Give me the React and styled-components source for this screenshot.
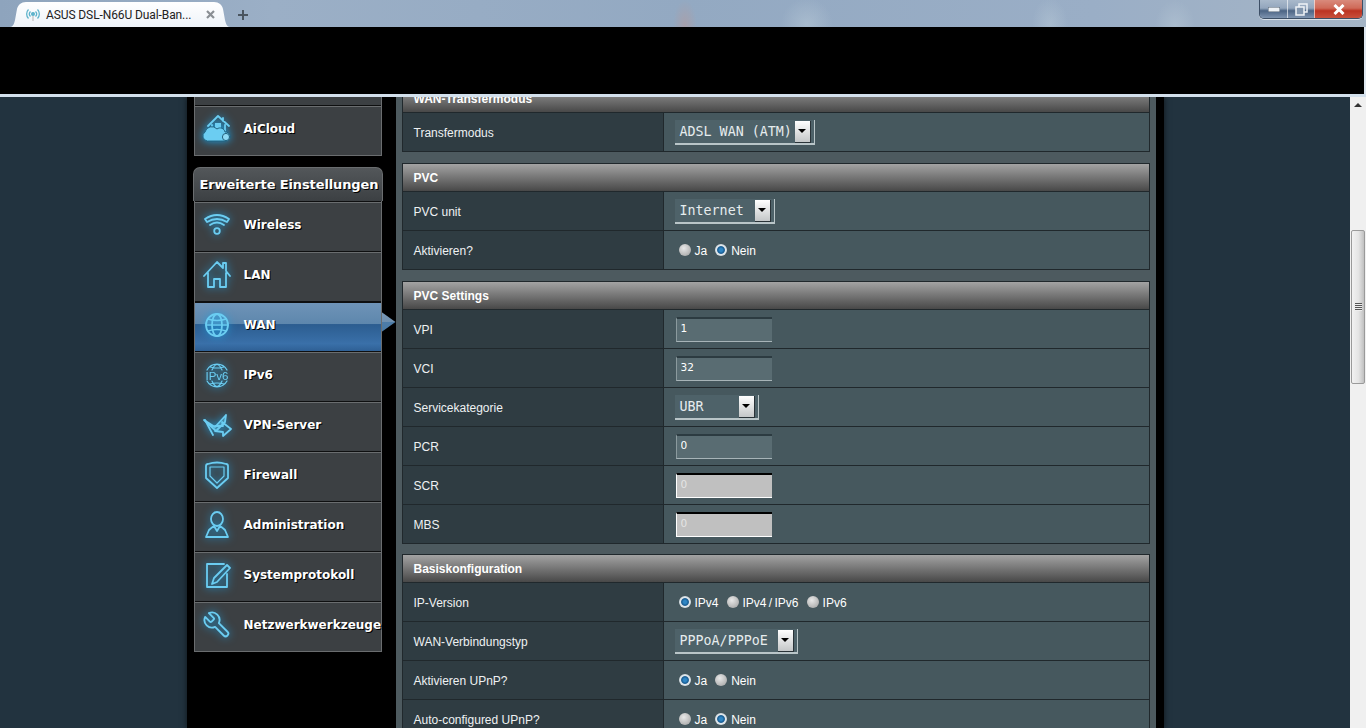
import React from 'react'
import styled, { createGlobalStyle } from 'styled-components'

const GlobalStyle = createGlobalStyle`
  html, body {
    margin: 0;
    height: 100%;
    overflow: hidden;
    background: #000;
    font-family: "Liberation Sans", Arial, sans-serif;
  }
`;

const Screen = styled.div`
  width: 1366px;
  height: 728px;
  display: flex;
  flex-direction: column;
  overflow: hidden;
`;

const TitleBar = styled.div`
  height: 27px;
  flex: none;
  display: flex;
  align-items: flex-end;
  padding-left: 10px;
  background:
    radial-gradient(ellipse 12px 26px at 685px 26px, rgba(214, 140, 120, .3), transparent),
    radial-gradient(ellipse 26px 26px at 807px 24px, rgba(196, 212, 222, .4), transparent),
    radial-gradient(ellipse 18px 26px at 1050px 24px, rgba(196, 212, 222, .35), transparent),
    radial-gradient(ellipse 20px 26px at 1175px 26px, rgba(196, 212, 222, .35), transparent),
    linear-gradient(90deg, #8ea4bd 0%, #9bafc6 20%, #93a9c2 50%, #9aaec6 80%, #a5b5c6 100%);
`;

const Tab = styled.div`
  width: 220px;
  height: 25px;
  box-sizing: border-box;
  display: flex;
  align-items: center;
  padding: 0 15px 0 16px;
  background: linear-gradient(#ffffff, #eef3f9);
  clip-path: path('M0 25 C3 25 4 22 5 18 L7 7 C8 3 11 0 16 0 L204 0 C209 0 212 3 213 7 L215 18 C216 22 217 25 220 25 Z');
`;

const TabTitle = styled.span`
  flex: 1;
  margin-left: 6px;
  font: 12px Roboto, "Liberation Sans", sans-serif;
  letter-spacing: -.1px;
  color: #222;
  white-space: nowrap;
`;

const NewTab = styled.svg`
  width: 12px;
  height: 12px;
  margin: 0 0 6px 7px;
`;

const WindowButtons = styled.div`
  margin-left: auto;
  margin-right: 3px;
  align-self: flex-start;
  display: flex;
  height: 18px;
  border: 1px solid #3d4f66;
  border-top: 0;
  border-radius: 0 0 5px 5px;
  box-shadow: 0 1px 0 rgba(255, 255, 255, .6);
  overflow: hidden;
`;

const WinButton = styled.div`
  width: ${p => p.$width}px;
  display: flex;
  align-items: center;
  justify-content: center;
  border-left: ${p => (p.$first ? '0' : '1px solid rgba(255,255,255,.6)')};
  background: ${p => (p.$close
    ? 'linear-gradient(#d98a7c 0%, #cf6a58 45%, #bb3322 60%, #c8503c 100%)'
    : 'linear-gradient(#a9b9cb 0%, #93a6bd 45%, #4c6484 60%, #7e94b0 100%)')};
`;

const BlackBand = styled.div`
  height: 67px;
  flex: none;
  background: #000;
  border-right: 2px solid #dfe8f0;
  box-sizing: border-box;
`;

const Divider = styled.div`
  height: 3px;
  flex: none;
  background: #d3e0ec;
`;

const Viewport = styled.div`
  flex: 1;
  min-height: 0;
  display: flex;
`;

const Page = styled.div`
  flex: 1;
  display: flex;
  justify-content: center;
  overflow: hidden;
  background: #22333f;
`;

const Column = styled.div`
  width: 977px;
  display: flex;
  gap: 14px;
  padding-left: 7px;
  box-sizing: border-box;
  background: #000;
  box-shadow: 0 0 6px rgba(0, 0, 0, .6);
`;

const Sidebar = styled.nav`
  width: 188px;
  flex: none;
  margin-top: -42px;
`;

const NavGroup = styled.div`
  border: 1px solid #6a6d6f;
  border-top: 0;
  margin-bottom: 11px;
`;

const NavHead = styled.div`
  height: 34px;
  box-sizing: border-box;
  display: flex;
  align-items: center;
  padding-left: 6px;
  margin: 0 -1px;
  border: 1px solid #6a6d6f;
  border-bottom: 0;
  border-radius: 7px 7px 0 0;
  background: linear-gradient(#53575a, #3c4043);
  font: bold 13px "DejaVu Sans", Verdana, sans-serif;
  letter-spacing: -.12px;
  color: #fff;
  text-shadow: 1px 1px 0 #000;
  white-space: nowrap;
`;

const NavRow = styled.div`
  position: relative;
  height: 50px;
  box-sizing: border-box;
  display: flex;
  align-items: center;
  padding: 0 0 4px 7px;
  border-top: 1px solid #0e0f10;
  box-shadow: inset 0 1px 0 ${p => (p.$active ? '#0e0f10' : '#6a6d6f')};
  background: ${p => (p.$active
    ? 'linear-gradient(#6f94b8 0%, #5e87ad 44%, #2c5d90 46%, #3a70a9 85%, #2f6095 100%)'
    : '#3c4043')};

  ${p => p.$active && `
    &::after {
      content: '';
      position: absolute;
      left: 100%;
      top: 10px;
      width: 14px;
      height: 20px;
      margin-left: 1px;
      background: linear-gradient(#7a9ab8 0%, #6f90b0 50%, #4d7ca8 52%, #4a7aa4 100%);
      clip-path: polygon(0 0, 100% 50%, 0 100%);
    }
  `}
`;

const NavIcon = styled.svg`
  width: 30px;
  height: 30px;
  flex: none;
  margin-right: 12px;
  fill: none;
  stroke: #6bcdf2;
  stroke-width: 1.8;
  stroke-linejoin: round;
  stroke-linecap: round;
  filter: drop-shadow(0 0 4px #1f9fe0);
`;

const NavLabel = styled.span`
  font: bold 12px "DejaVu Sans", Verdana, sans-serif;
  color: #fff;
  text-shadow: 1px 1px 0 #000;
  white-space: nowrap;
`;

const Panel = styled.main`
  width: 760px;
  flex: none;
  overflow: hidden;
  background: #4d5a5f;
`;

const PanelInner = styled.div`
  margin: -13px 6px 0;
`;

const Table = styled.section`
  margin-bottom: ${p => p.$gap ?? 11}px;
  border: 1px solid #20282c;
  border-bottom-width: 0;
`;

const TableHead = styled.h2`
  margin: 0;
  height: 28px;
  box-sizing: border-box;
  padding-left: 11px;
  display: flex;
  align-items: center;
  border-bottom: 1px solid #20282c;
  background: linear-gradient(#a3a3a3, #484848);
  font: bold 12px "Liberation Sans", Arial, sans-serif;
  color: #fff;
`;

const Row = styled.div`
  height: 39px;
  box-sizing: border-box;
  display: grid;
  grid-template-columns: 261px 1fr;
  border-bottom: 1px solid #20282c;
`;

const Label = styled.div`
  display: flex;
  align-items: center;
  padding: 2px 0 0 11px;
  background: #2f3c42;
  border-right: 1px solid #20282c;
  font-size: 12px;
  color: #eef1f2;
`;

const Value = styled.div`
  display: flex;
  align-items: center;
  padding: 2px 0 0 11px;
  background: #46585e;
`;

const Select = styled.div`
  width: ${p => p.$width}px;
  height: 25px;
  margin-bottom: 1px;
  box-sizing: border-box;
  display: flex;
  align-items: center;
  justify-content: space-between;
  padding: 0 3px 0 5px;
  background: #4e6269;
  border-bottom: 2px solid #b9c5c8;
  border-right: 1px solid #b9c5c8;
  font: 13.33px "DejaVu Sans Mono", "Liberation Mono", monospace;
  color: #e6ecee;
  white-space: pre;
`;

const SelectArrow = styled.span`
  width: 15px;
  height: 21px;
  flex: none;
  display: flex;
  align-items: center;
  justify-content: center;
  background: linear-gradient(#ffffff, #c4c7c8);
  border: 1px solid #2a3338;
  border-width: 0 1px 1px 0;

  &::before {
    content: '';
    border: 4px solid transparent;
    border-top: 4px solid #000;
    border-bottom: 0;
  }
`;

const TextInput = styled.input`
  width: 96px;
  height: 25px;
  box-sizing: border-box;
  margin: 0 0 1px 1px;
  padding: 0 0 4px 4px;
  border: 0;
  border-top: 2px solid #2c3b41;
  border-left: 1px solid #8b9a9e;
  border-bottom: 1px solid #a7b4b8;
  border-radius: 0;
  outline: 0;
  background: #596c72;
  font: 10.5px "DejaVu Sans", sans-serif;
  color: #fff;

  &:disabled {
    background: #c0c0c0;
    border-top: 2px solid #000;
    border-left: 1px solid #fff;
    border-bottom: 1px solid #fff;
    color: #e4e4e4;
  }
`;

const RadioGroup = styled.div`
  display: flex;
  align-items: center;
  gap: 8px;
  padding-left: 4px;
`;

const RadioLabel = styled.label`
  display: flex;
  align-items: center;
  gap: 4px;
  font-size: 12px;
  word-spacing: -1px;
  color: #fff;
`;

const Radio = styled.input`
  appearance: none;
  width: 12px;
  height: 12px;
  margin: 0 0 2px;
  border-radius: 50%;
  background: radial-gradient(circle at 40% 35%, #e8e8e8, #b0b0b0 75%, #8a8a8a);

  &:checked {
    background: radial-gradient(circle at 50% 50%, #2f86c4 0 1.5px, #175a90 3.4px, #e4eaee 4.4px, #aebac0 100%);
  }
`;

const ScrollTrack = styled.div`
  width: 16px;
  flex: none;
  box-sizing: border-box;
  position: relative;
  background: #f0f0f0;
`;

const ScrollUp = styled.div`
  height: 0;
  width: 0;
  margin: 6px 0 0 4px;
  border: 4px solid transparent;
  border-top: 0;
  border-bottom: 4px solid #333;
`;

const ScrollThumb = styled.div`
  position: absolute;
  top: 133px;
  left: 1px;
  width: 14px;
  height: 154px;
  box-sizing: border-box;
  display: flex;
  align-items: center;
  justify-content: center;
  border: 1px solid #9a9a9a;
  border-radius: 2px;
  background: linear-gradient(90deg, #f2f2f2 0%, #e4e4e4 55%, #c0c0c0 100%);
`;

const Grip = styled.div`
  width: 7px;
  height: 8px;
  background: repeating-linear-gradient(#555 0 1px, #eee 1px 2px);
`;

const AiCloudIcon = () => (
  <NavIcon viewBox="0 0 30 30">
    <path d="M6 12 L16 2 L27 12 M21 4 V7 M10 11 V17 M23 11 V17" />
    <path d="M13 9 h6 v6 h-6z" fill="#6bcdf2" stroke="none" />
    <path d="M5 27 a5 5 0 0 1 -2 -9 a7 7 0 0 1 12 -3 a5 5 0 0 1 8 3 a4.5 4.5 0 0 1 1 9 z" fill="#6bcdf2" stroke="#22627f" strokeWidth="1" />
    <circle cx="24" cy="23" r="3.6" fill="#8fdaf5" stroke="#22627f" strokeWidth="1" />
  </NavIcon>
)

const WifiIcon = () => (
  <NavIcon viewBox="0 0 30 30">
    <path d="M3 9 Q15 1 27 9 L25 12 Q15 6 5 12 Z" />
    <path d="M8 15 Q15 10 22 15" />
    <circle cx="15" cy="21" r="2.8" />
  </NavIcon>
)

const HouseIcon = () => (
  <NavIcon viewBox="0 0 30 30">
    <path d="M2 16 L15 2 L21 8 V3 H24 V11 L28 16 M6 13 V27 H12 V19 H18 V27 H24 V13" />
  </NavIcon>
)

const GlobeIcon = () => (
  <NavIcon viewBox="0 0 30 30">
    <circle cx="15" cy="15" r="11" />
    <ellipse cx="15" cy="15" rx="5" ry="11" />
    <path d="M4 15 H26 M6 9 Q15 12 24 9 M6 21 Q15 18 24 21" strokeWidth="1.4" />
  </NavIcon>
)

const Ipv6Icon = () => (
  <NavIcon viewBox="0 0 30 30">
    <path d="M5 10 A11.5 11.5 0 0 1 25 10 M5 21 A11.5 11.5 0 0 0 25 21 M10 10 Q15 -1 20 10 M10 21 Q15 32 20 21 M8 7 Q15 9 22 7 M8 24 Q15 22 22 24" strokeWidth="1.2" />
    <text x="15" y="19.5" textAnchor="middle" fontSize="11.5" fontFamily="Liberation Sans, sans-serif" fill="#6bcdf2" stroke="none">IPv6</text>
  </NavIcon>
)

const VpnIcon = () => (
  <NavIcon viewBox="0 0 30 30">
    <path d="M2 10 L13 17 L24 5 L23 12 L14 21 Z" fill="#6bcdf2" fillOpacity=".35" />
    <path d="M3 10 L11 25 M13 16 H21 L20 12 L29 19 L21 26 V22 L13 21" />
  </NavIcon>
)

const ShieldIcon = () => (
  <NavIcon viewBox="0 0 30 30">
    <path d="M6 4 Q15 1 24 4 Q26 4 26 6 V18 L15 28 L4 18 V6 Q4 4 6 4 Z" />
    <path d="M8 7 H22 V16 L15 23 L8 16 Z" strokeWidth="1.2" />
  </NavIcon>
)

const PersonIcon = () => (
  <NavIcon viewBox="0 0 30 30">
    <ellipse cx="15" cy="9" rx="6" ry="7" />
    <path d="M4 27 L7 20 Q9 18 12 16 L15 21 L18 16 Q21 18 23 20 L26 27 Z" />
  </NavIcon>
)

const NoteIcon = () => (
  <NavIcon viewBox="0 0 30 30">
    <path d="M25 14 V27 H5 V4 H22" />
    <path d="M10 24 L12 18 L25 5 L28 8 L15 22 Z" />
  </NavIcon>
)

const WrenchIcon = () => (
  <NavIcon viewBox="0 0 24 24">
    <path transform="translate(24,0) scale(-1,1)" d="M14.7 6.3a1 1 0 0 0 0 1.4l1.6 1.6a1 1 0 0 0 1.4 0l3.77-3.77a6 6 0 0 1-7.94 7.94l-6.91 6.91a2.12 2.12 0 0 1-3-3l6.91-6.91a6 6 0 0 1 7.94-7.94l-3.76 3.76z" strokeWidth="1.5" />
  </NavIcon>
)

const NAV_ITEMS = [
  { name: 'Wireless', Icon: WifiIcon },
  { name: 'LAN', Icon: HouseIcon },
  { name: 'WAN', Icon: GlobeIcon, active: true },
  { name: 'IPv6', Icon: Ipv6Icon },
  { name: 'VPN-Server', Icon: VpnIcon },
  { name: 'Firewall', Icon: ShieldIcon },
  { name: 'Administration', Icon: PersonIcon },
  { name: 'Systemprotokoll', Icon: NoteIcon },
  { name: 'Netzwerkwerkzeuge', Icon: WrenchIcon },
];

const RadioRow = ({ name, options, checked }) => (
  <RadioGroup>
    {options.map(o => (
      <RadioLabel key={o}>
        <Radio type="radio" name={name} defaultChecked={o === checked} />
        {o}
      </RadioLabel>
    ))}
  </RadioGroup>
)

const Dropdown = ({ width, children }) => (
  <Select $width={width}>
    {children}
    <SelectArrow />
  </Select>
)

const App = () => {
  return (
    <Screen>
      <GlobalStyle />
      <TitleBar>
        <Tab>
          <svg width="14" height="14" viewBox="0 0 14 14" fill="none" stroke="#5fb4cc" strokeWidth="1.3">
            <circle cx="7" cy="6" r="1.4" fill="#5fb4cc" />
            <path d="M4.5 3.5 a3.6 3.6 0 0 0 0 5 M9.5 3.5 a3.6 3.6 0 0 1 0 5 M2.5 1.5 a6.4 6.4 0 0 0 0 9 M11.5 1.5 a6.4 6.4 0 0 1 0 9" />
            <path d="M7 8 V13" stroke="#c4c4c4" />
          </svg>
          <TabTitle>ASUS DSL-N66U Dual-Ban...</TabTitle>
          <svg width="9" height="9" viewBox="0 0 9 9" stroke="#8a8f94" strokeWidth="2.2">
            <path d="M1 1 L8 8 M8 1 L1 8" />
          </svg>
        </Tab>
        <NewTab viewBox="0 0 12 12" stroke="#4a5560" strokeWidth="2">
          <path d="M6 1 V11 M1 6 H11" />
        </NewTab>
        <WindowButtons>
          <WinButton $width={27} $first>
            <svg width="12" height="5"><rect width="12" height="5" fill="#eef2f6" stroke="#4a5a6c" /></svg>
          </WinButton>
          <WinButton $width={26}>
            <svg width="13" height="13" viewBox="0 0 13 13" fill="none" stroke="#eef2f6" strokeWidth="1.5">
              <rect x="4" y="1" width="8" height="8" />
              <rect x="1" y="4" width="8" height="8" fill="#8195ad" />
            </svg>
          </WinButton>
          <WinButton $width={47} $close>
            <svg width="12" height="11" viewBox="0 0 12 11" stroke="#fff" strokeWidth="3">
              <path d="M1.5 1 L10.5 10 M10.5 1 L1.5 10" />
            </svg>
          </WinButton>
        </WindowButtons>
      </TitleBar>
      <BlackBand />
      <Divider />
      <Viewport>
        <Page>
          <Column>
            <Sidebar>
              <NavGroup>
                <NavRow />
                <NavRow>
                  <AiCloudIcon />
                  <NavLabel>AiCloud</NavLabel>
                </NavRow>
              </NavGroup>
              <NavHead>Erweiterte Einstellungen</NavHead>
              <NavGroup>
                {NAV_ITEMS.map(({ name, Icon, active }) => (
                  <NavRow key={name} $active={active}>
                    <Icon />
                    <NavLabel>{name}</NavLabel>
                  </NavRow>
                ))}
              </NavGroup>
            </Sidebar>
            <Panel>
              <PanelInner>
                <Table>
                  <TableHead>WAN-Transfermodus</TableHead>
                  <Row>
                    <Label>Transfermodus</Label>
                    <Value><Dropdown width={140}>ADSL WAN (ATM)</Dropdown></Value>
                  </Row>
                </Table>
                <Table>
                  <TableHead>PVC</TableHead>
                  <Row>
                    <Label>PVC unit</Label>
                    <Value><Dropdown width={100}>Internet</Dropdown></Value>
                  </Row>
                  <Row>
                    <Label>Aktivieren?</Label>
                    <Value><RadioRow name="pvc" options={['Ja', 'Nein']} checked="Nein" /></Value>
                  </Row>
                </Table>
                <Table $gap={10}>
                  <TableHead>PVC Settings</TableHead>
                  <Row>
                    <Label>VPI</Label>
                    <Value><TextInput defaultValue="1" /></Value>
                  </Row>
                  <Row>
                    <Label>VCI</Label>
                    <Value><TextInput defaultValue="32" /></Value>
                  </Row>
                  <Row>
                    <Label>Servicekategorie</Label>
                    <Value><Dropdown width={84}>UBR</Dropdown></Value>
                  </Row>
                  <Row>
                    <Label>PCR</Label>
                    <Value><TextInput defaultValue="0" /></Value>
                  </Row>
                  <Row>
                    <Label>SCR</Label>
                    <Value><TextInput defaultValue="0" disabled /></Value>
                  </Row>
                  <Row>
                    <Label>MBS</Label>
                    <Value><TextInput defaultValue="0" disabled /></Value>
                  </Row>
                </Table>
                <Table>
                  <TableHead>Basiskonfiguration</TableHead>
                  <Row>
                    <Label>IP-Version</Label>
                    <Value><RadioRow name="ip" options={['IPv4', 'IPv4 / IPv6', 'IPv6']} checked="IPv4" /></Value>
                  </Row>
                  <Row>
                    <Label>WAN-Verbindungstyp</Label>
                    <Value><Dropdown width={123}>PPPoA/PPPoE</Dropdown></Value>
                  </Row>
                  <Row>
                    <Label>Aktivieren UPnP?</Label>
                    <Value><RadioRow name="upnp" options={['Ja', 'Nein']} checked="Ja" /></Value>
                  </Row>
                  <Row>
                    <Label>Auto-configured UPnP?</Label>
                    <Value><RadioRow name="auto" options={['Ja', 'Nein']} checked="Nein" /></Value>
                  </Row>
                </Table>
              </PanelInner>
            </Panel>
          </Column>
        </Page>
        <ScrollTrack>
          <ScrollUp />
          <ScrollThumb><Grip /></ScrollThumb>
        </ScrollTrack>
      </Viewport>
    </Screen>
  )
}

export default App
